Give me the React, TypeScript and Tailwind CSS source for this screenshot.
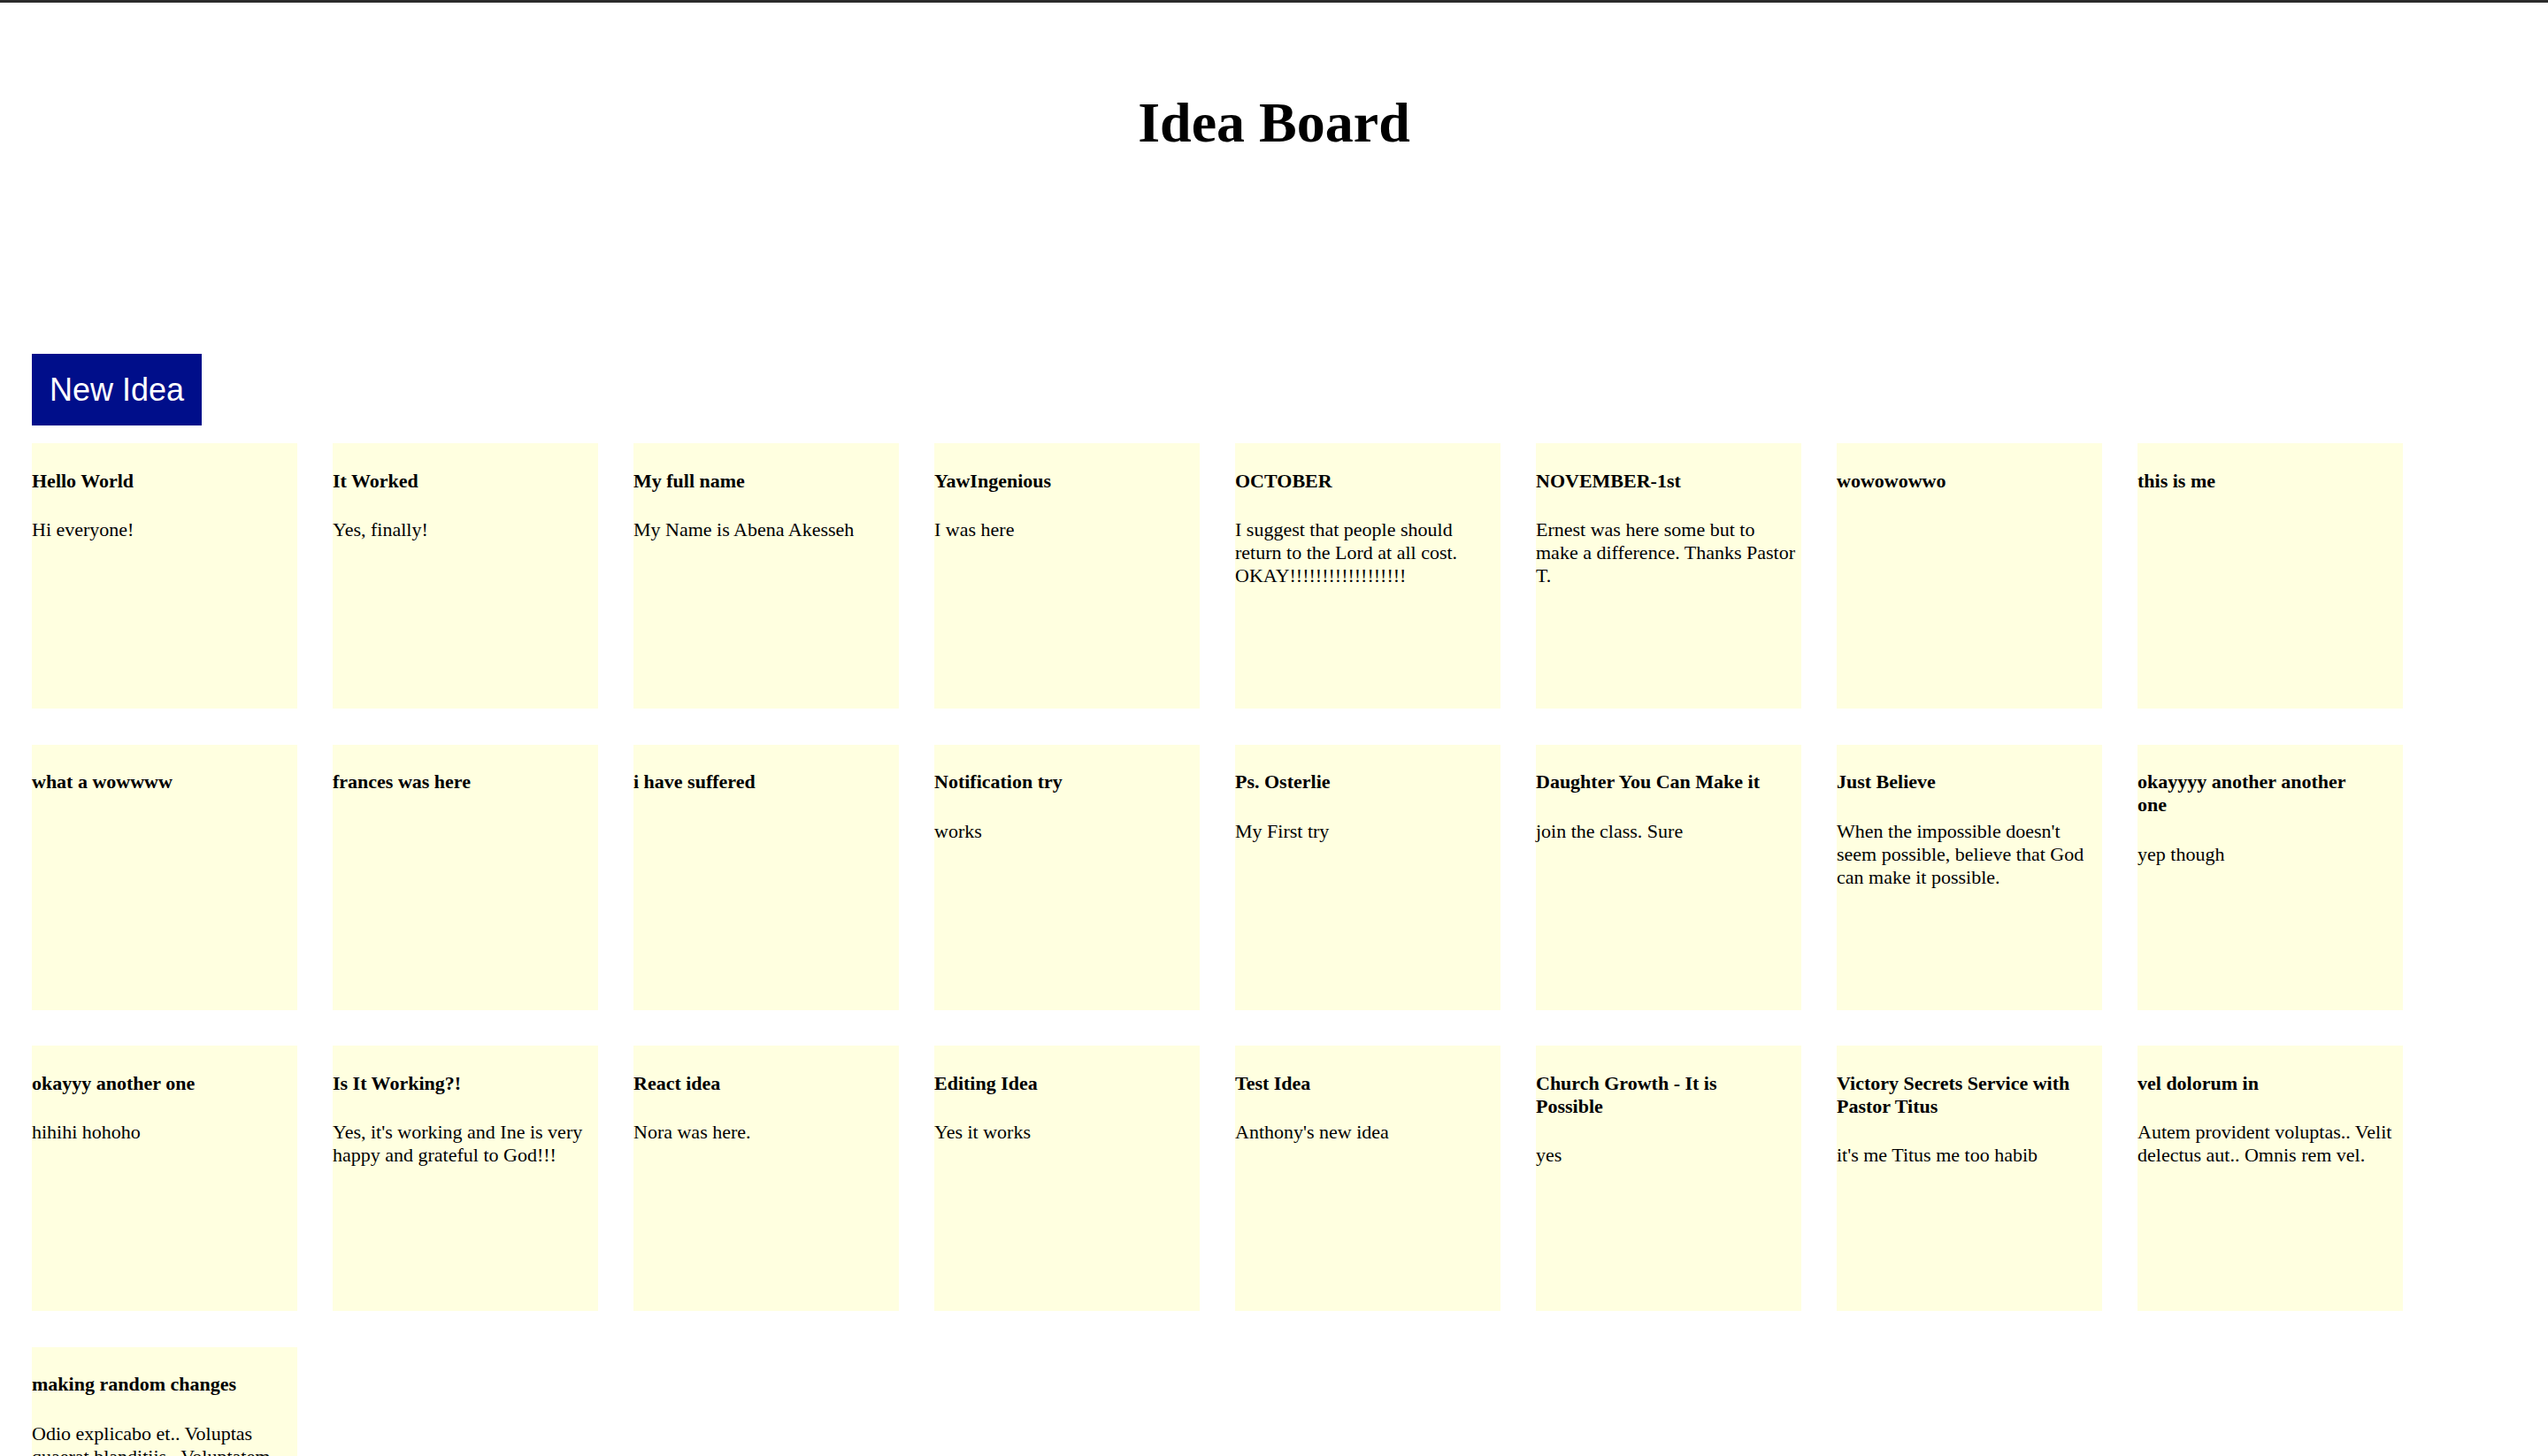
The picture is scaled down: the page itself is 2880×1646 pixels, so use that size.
import React from 'react';

interface Idea {
  id: number;
  title: string;
  body: string;
}

const ideas: Idea[] = [
  { id: 1, title: 'Hello World', body: 'Hi everyone!' },
  { id: 2, title: 'It Worked', body: 'Yes, finally!' },
  { id: 3, title: 'My full name', body: 'My Name is Abena Akesseh' },
  { id: 4, title: 'YawIngenious', body: 'I was here' },
  { id: 5, title: 'OCTOBER', body: 'I suggest that people should return to the Lord at all cost. OKAY!!!!!!!!!!!!!!!!!!' },
  { id: 6, title: 'NOVEMBER-1st', body: 'Ernest was here some but to make a difference. Thanks Pastor T.' },
  { id: 7, title: 'wowowowwo', body: '' },
  { id: 8, title: 'this is me', body: '' },
  { id: 9, title: 'what a wowwww', body: '' },
  { id: 10, title: 'frances was here', body: '' },
  { id: 11, title: 'i have suffered', body: '' },
  { id: 12, title: 'Notification try', body: 'works' },
  { id: 13, title: 'Ps. Osterlie', body: 'My First try' },
  { id: 14, title: 'Daughter You Can Make it', body: 'join the class. Sure' },
  { id: 15, title: 'Just Believe', body: "When the impossible doesn't seem possible, believe that God can make it possible." },
  { id: 16, title: 'okayyyy another another one', body: 'yep though' },
  { id: 17, title: 'okayyy another one', body: 'hihihi hohoho' },
  { id: 18, title: 'Is It Working?!', body: "Yes, it's working and Ine is very happy and grateful to God!!!" },
  { id: 19, title: 'React idea', body: 'Nora was here.' },
  { id: 20, title: 'Editing Idea', body: 'Yes it works' },
  { id: 21, title: 'Test Idea', body: "Anthony's new idea" },
  { id: 22, title: 'Church Growth - It is Possible', body: 'yes' },
  { id: 23, title: 'Victory Secrets Service with Pastor Titus', body: "it's me Titus me too habib" },
  { id: 24, title: 'vel dolorum in', body: 'Autem provident voluptas.. Velit delectus aut.. Omnis rem vel.' },
  { id: 25, title: 'making random changes', body: 'Odio explicabo et.. Voluptas quaerat blanditiis.. Voluptatem rerum sit.' },
];

const Tile: React.FC<{ idea: Idea }> = ({ idea }) => {
  return (
    <div className="h-[300px] w-[300px] bg-[#ffffe0] text-left text-[22px] leading-[26px] text-black">
      <span className="invisible float-right m-[10px] cursor-pointer text-red-600">x</span>
      <h4 className="my-[29.5px] text-[22px] font-bold leading-[26px]">{idea.title}</h4>
      <p className="my-[22px]">{idea.body}</p>
    </div>
  );
};

export default function App() {
  return (
    <div className="min-h-screen bg-white font-['Liberation_Serif','Times_New_Roman',serif]">
      <div className="h-[3px] bg-[#2b2b2b]" />

      <div className="h-[397px] pt-[99px] text-center">
        <h1 className="text-[64px] font-bold leading-[74px] text-black">Idea Board</h1>
      </div>

      <div className="pl-[36px]">
        <button className="cursor-pointer bg-[#000e8a] px-[20px] py-[20px] font-['Liberation_Sans',Arial,sans-serif] text-[36px] leading-[41px] text-white">
          New Idea
        </button>
      </div>

      <div className="mt-[20px] grid grid-cols-[repeat(8,300px)] gap-x-[40px] gap-y-[40.5px] pl-[36px]">
        {ideas.map((idea) => (
          <Tile key={idea.id} idea={idea} />
        ))}
      </div>
    </div>
  );
}
